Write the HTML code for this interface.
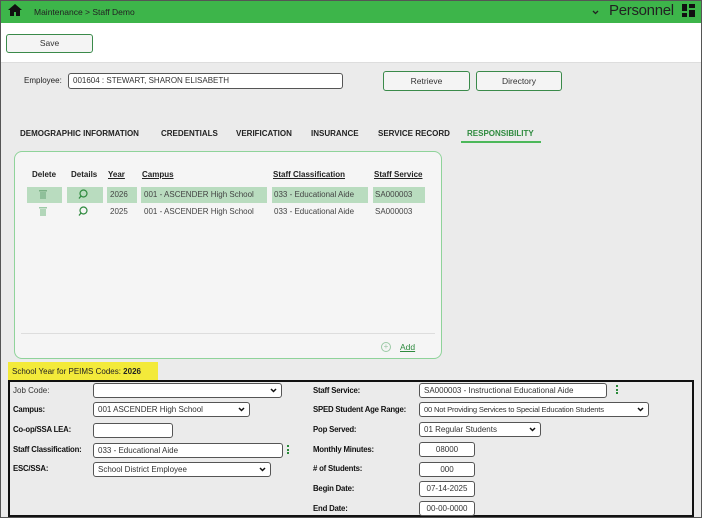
<!DOCTYPE html>
<html><head><meta charset="utf-8"><style>
*{box-sizing:border-box;margin:0;padding:0}
body{width:702px;height:518px;overflow:hidden;background:#ebebeb;font-family:"Liberation Sans",sans-serif;font-size:9px;color:#222;position:relative}
.a{position:absolute}
.frame{left:0;top:0;width:702px;height:518px;border:1px solid #555;z-index:10;pointer-events:none}
.hdr{left:0;top:0;width:702px;height:23px;background:#3db54a}
.btn{position:absolute;background:#f4f4f4;border:1px solid #3a8a4a;border-radius:3px;text-align:center;color:#333;font-size:8.5px}
.inp{position:absolute;background:#fff;border:1px solid #555;border-radius:3px;font-size:8px;padding-left:4px;color:#333;white-space:nowrap;overflow:hidden}
.sel svg{position:absolute;right:4px;top:4px}
.tab{position:absolute;top:129px;font-size:8px;font-weight:bold;color:#222}
.th{position:absolute;top:170px;font-size:8px;font-weight:bold;color:#222}
.u{text-decoration:underline}
.td{position:absolute;font-size:8px;color:#444}
.hl{position:absolute;background:#b9dcbf;top:187px;height:16px}
.lbl{position:absolute;font-size:7.8px;font-weight:bold;color:#111;letter-spacing:-0.2px}
.dots{position:absolute;width:3px;font-size:0}
.dots i{display:block;width:2px;height:2px;background:#2a8a3a;margin-bottom:1.5px}
</style></head><body>
<div class="a frame"></div>
<div class="a hdr"></div>
<svg class="a" style="left:8px;top:4px" width="14" height="12" viewBox="0 0 14 12"><path d="M7 0L0 6h2v6h4V8h2v4h4V6h2z" fill="#111"/></svg>
<div class="a" style="left:34px;top:7px;font-size:8.5px;color:#222">Maintenance &gt; Staff Demo</div>
<svg class="a" style="left:592px;top:10px" width="7" height="5"><path d="M1 1l2.5 2.5L6 1" stroke="#222" stroke-width="1.3" fill="none"/></svg>
<div class="a" style="left:609px;top:2px;font-size:15px;color:#222;letter-spacing:-0.3px">Personnel</div>
<svg class="a" style="left:682px;top:4px" width="13" height="13"><rect x="0" y="0" width="5" height="7" fill="#111"/><rect x="7" y="0" width="6" height="4" fill="#111"/><rect x="0" y="9" width="5" height="4" fill="#111"/><rect x="7" y="6" width="6" height="7" fill="#111"/></svg>
<div class="a" style="left:0;top:23px;width:702px;height:40px;background:#fff;border-bottom:1px solid #ddd"></div>
<div class="btn" style="left:6px;top:34px;width:87px;height:19px;line-height:17px">Save</div>
<div class="a" style="left:24px;top:76px;font-size:8px">Employee:</div>
<div class="inp" style="left:68px;top:73px;width:275px;height:16px;line-height:14px">001604 : STEWART, SHARON ELISABETH</div>
<div class="btn" style="left:383px;top:71px;width:87px;height:20px;line-height:18px">Retrieve</div>
<div class="btn" style="left:476px;top:71px;width:86px;height:20px;line-height:18px">Directory</div>
<div class="tab" style="left:20px">DEMOGRAPHIC INFORMATION</div>
<div class="tab" style="left:161px">CREDENTIALS</div>
<div class="tab" style="left:236px">VERIFICATION</div>
<div class="tab" style="left:311px">INSURANCE</div>
<div class="tab" style="left:378px">SERVICE RECORD</div>
<div class="tab" style="left:467px;color:#2e8a3e">RESPONSIBILITY</div>
<div class="a" style="left:461px;top:141px;width:80px;height:2px;background:#4cb85a"></div>
<div class="a" style="left:14px;top:151px;width:428px;height:208px;background:#f5f5f5;border:1.5px solid #8fd39a;border-radius:8px"></div>
<div class="th" style="left:32px">Delete</div>
<div class="th" style="left:71px">Details</div>
<div class="th u" style="left:108px">Year</div>
<div class="th u" style="left:142px">Campus</div>
<div class="th u" style="left:273px">Staff Classification</div>
<div class="th u" style="left:374px">Staff Service</div>
<div class="hl" style="left:27px;width:35px"></div>
<div class="hl" style="left:67px;width:36px"></div>
<div class="hl" style="left:107px;width:30px"></div>
<div class="hl" style="left:141px;width:126px"></div>
<div class="hl" style="left:272px;width:96px"></div>
<div class="hl" style="left:373px;width:52px"></div>
<svg class="a" style="left:39px;top:189px" width="8" height="10"><rect x="0" y="1" width="8" height="1.5" fill="#7ab085"/><rect x="1" y="3" width="6" height="7" fill="#8fc09a"/></svg>
<svg class="a" style="left:39px;top:206px" width="8" height="10"><rect x="0" y="1" width="8" height="1.5" fill="#9ccaa6"/><rect x="1" y="3" width="6" height="7" fill="#b2d6b9"/></svg>
<svg class="a" style="left:78px;top:189px" width="10" height="10"><circle cx="5.5" cy="4.5" r="3.5" fill="none" stroke="#2e8a3e" stroke-width="1.2"/><path d="M3 7L1 9.5" stroke="#2e8a3e" stroke-width="1.3"/></svg>
<svg class="a" style="left:78px;top:206px" width="10" height="10"><circle cx="5.5" cy="4.5" r="3.5" fill="none" stroke="#2e8a3e" stroke-width="1.2"/><path d="M3 7L1 9.5" stroke="#2e8a3e" stroke-width="1.3"/></svg>
<div class="td" style="left:110px;top:190px">2026</div>
<div class="td" style="left:144px;top:190px">001 - ASCENDER High School</div>
<div class="td" style="left:274px;top:190px">033 - Educational Aide</div>
<div class="td" style="left:375px;top:190px">SA000003</div>
<div class="td" style="left:110px;top:207px">2025</div>
<div class="td" style="left:144px;top:207px">001 - ASCENDER High School</div>
<div class="td" style="left:274px;top:207px">033 - Educational Aide</div>
<div class="td" style="left:375px;top:207px">SA000003</div>
<div class="a" style="left:21px;top:333px;width:414px;height:1px;background:#ddd"></div>
<div class="a" style="left:381px;top:342px;width:10px;height:10px;border:1px solid #9ccaa6;border-radius:50%;font-size:8px;line-height:8px;text-align:center;color:#9ccaa6">+</div>
<div class="a u" style="left:400px;top:342px;font-size:8.5px;color:#2e8a3e">Add</div>
<div class="a" style="left:8px;top:362px;width:150px;height:19px;background:#f3ea3a;font-size:8px;line-height:19px;padding-left:4px;color:#222">School Year for PEIMS Codes: <b>2026</b></div>
<div class="a" style="left:8px;top:380px;width:686px;height:137px;border:2px solid #111"></div>
<div class="a" style="left:13px;top:386px;font-size:8px;color:#333">Job Code:</div>
<div class="lbl" style="left:13px;top:405px">Campus:</div>
<div class="lbl" style="left:13px;top:425px">Co-op/SSA LEA:</div>
<div class="lbl" style="left:13px;top:445px">Staff Classification:</div>
<div class="lbl" style="left:13px;top:464px">ESC/SSA:</div>
<div class="inp sel" style="left:93px;top:383px;width:189px;height:15px"><svg width="7" height="5"><path d="M1 1l2.5 2.5L6 1" stroke="#111" stroke-width="1.5" fill="none"/></svg></div>
<div class="inp sel" style="left:93px;top:402px;width:157px;height:15px;line-height:13px">001 ASCENDER High School<svg width="7" height="5"><path d="M1 1l2.5 2.5L6 1" stroke="#111" stroke-width="1.5" fill="none"/></svg></div>
<div class="inp" style="left:93px;top:423px;width:80px;height:15px"></div>
<div class="inp" style="left:93px;top:443px;width:190px;height:15px;line-height:13px">033 - Educational Aide</div>
<div class="dots" style="left:287px;top:445px"><i></i><i></i><i></i></div>
<div class="inp sel" style="left:93px;top:462px;width:178px;height:15px;line-height:13px">School District Employee<svg width="7" height="5"><path d="M1 1l2.5 2.5L6 1" stroke="#111" stroke-width="1.5" fill="none"/></svg></div>
<div class="lbl" style="left:313px;top:386px">Staff Service:</div>
<div class="lbl" style="left:313px;top:405px">SPED Student Age Range:</div>
<div class="lbl" style="left:313px;top:425px">Pop Served:</div>
<div class="lbl" style="left:313px;top:445px">Monthly Minutes:</div>
<div class="lbl" style="left:313px;top:464px">#&nbsp;of Students:</div>
<div class="lbl" style="left:313px;top:484px">Begin Date:</div>
<div class="lbl" style="left:313px;top:504px">End Date:</div>
<div class="inp" style="left:419px;top:383px;width:188px;height:15px;line-height:13px">SA000003 - Instructional Educational Aide</div>
<div class="dots" style="left:616px;top:385px"><i></i><i></i><i></i></div>
<div class="inp sel" style="left:419px;top:402px;width:230px;height:15px;line-height:13px;font-size:7.6px;letter-spacing:-0.2px">00 Not Providing Services to Special Education Students<svg width="7" height="5" style="background:#fff"><path d="M1 1l2.5 2.5L6 1" stroke="#111" stroke-width="1.5" fill="none"/></svg></div>
<div class="inp sel" style="left:419px;top:422px;width:122px;height:15px;line-height:13px">01 Regular Students<svg width="7" height="5"><path d="M1 1l2.5 2.5L6 1" stroke="#111" stroke-width="1.5" fill="none"/></svg></div>
<div class="inp" style="left:419px;top:442px;width:56px;height:15px;line-height:13px;text-align:center;padding:0">08000</div>
<div class="inp" style="left:419px;top:462px;width:56px;height:15px;line-height:13px;text-align:center;padding:0">000</div>
<div class="inp" style="left:419px;top:481px;width:56px;height:16px;line-height:14px;text-align:center;padding:0">07-14-2025</div>
<div class="inp" style="left:419px;top:501px;width:56px;height:15px;line-height:13px;text-align:center;padding:0">00-00-0000</div>
</body></html>
